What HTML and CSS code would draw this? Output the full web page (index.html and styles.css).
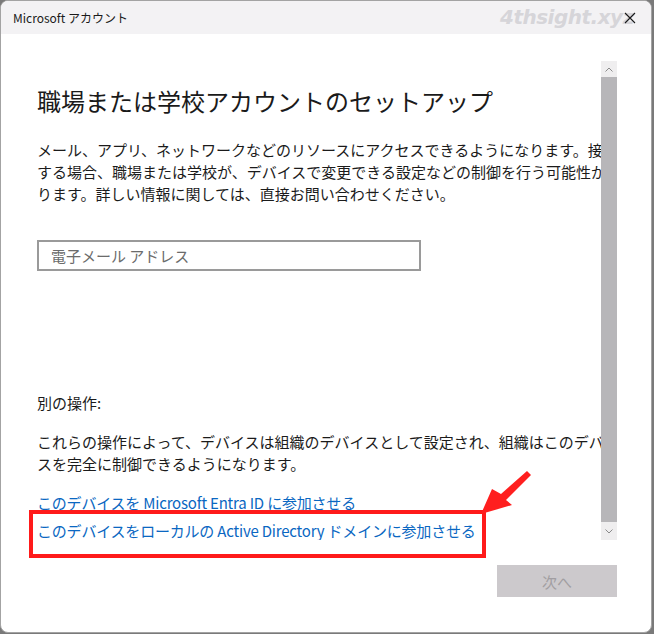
FILE: index.html
```html
<!DOCTYPE html>
<html lang="ja">
<head>
    <meta charset="UTF-8">
    <title>Microsoft アカウント</title>
    <link rel="stylesheet" href="styles.css">
</head>
<body>
    <div class="window">
        <div class="titlebar">
            <span class="title">Microsoft アカウント</span>
            <span class="watermark">4thsight.xyz</span>
            <svg class="close" width="12" height="12" viewBox="0 0 12 12">
                <path d="M1 1 L11 11 M11 1 L1 11" stroke="#1a1a1a" stroke-width="1.1" fill="none"/>
            </svg>
        </div>

        <div class="main">
            <div class="pane">
                <div class="content">
                    <h1>職場または学校アカウントのセットアップ</h1>
                    <p class="lead">メール、アプリ、ネットワークなどのリソースにアクセスできるようになります。接続する場合、職場または学校が、デバイスで変更できる設定などの制御を行う可能性があります。詳しい情報に関しては、直接お問い合わせください。</p>
                    <div class="input">電子メール アドレス</div>

                    <p class="label">別の操作:</p>
                    <p class="note">これらの操作によって、デバイスは組織のデバイスとして設定され、組織はこのデバイスを完全に制御できるようになります。</p>
                    <a class="link first" href="#">このデバイスを Microsoft Entra ID に参加させる</a>
                    <a class="link" href="#">このデバイスをローカルの Active Directory ドメインに参加させる</a>
                </div>
            </div>
            <div class="scrollbar">
                <div class="sb-btn">
                    <svg width="8" height="5" viewBox="0 0 8 5"><path d="M0.5 4.5 L4 1 L7.5 4.5" stroke="#8a8a8a" fill="none"/></svg>
                </div>
                <div class="sb-thumb"></div>
                <div class="sb-btn">
                    <svg width="8" height="5" viewBox="0 0 8 5"><path d="M0.5 0.5 L4 4 L7.5 0.5" stroke="#8a8a8a" fill="none"/></svg>
                </div>
            </div>
        </div>

        <div class="footer">
            <button class="next" disabled>次へ</button>
        </div>

        <div class="highlight"></div>
        <svg class="arrow" width="56" height="50" viewBox="0 0 56 50">
            <polygon points="49,3 53,7 28,32 34,37 3,46 14,21 23,26" fill="#ff1f1f"/>
        </svg>
    </div>
</body>
</html>
```

FILE: styles.css
```css
* {
    box-sizing: border-box;
}
body {
    margin: 0;
    background: #7a7a7a;
    font-family: "Noto Sans CJK JP", "Noto Sans", sans-serif;
    color: #1b1b1b;
}
.window {
    position: relative;
    width: 652px;
    height: 633px;
    background: #fff;
    border: 1px solid #a3a3a3;
    border-radius: 8px;
    overflow: hidden;
}
.titlebar {
    position: relative;
    height: 33px;
    background: #f3f2f4;
    display: flex;
    align-items: center;
    padding-left: 12px;
}
.title {
    font-size: 12px;
    line-height: 16px;
    color: #1a1a1a;
}
.watermark {
    position: absolute;
    left: 499px;
    top: 4px;
    font-family: "DejaVu Sans", sans-serif;
    font-size: 20px;
    font-weight: bold;
    font-style: italic;
    color: #d6d5d9;
    letter-spacing: -0.5px;
}
.close {
    position: absolute;
    left: 623px;
    top: 11px;
}
.main {
    display: flex;
    height: 479px;
    margin-top: 27px;
}
.pane {
    width: 600px;
    overflow: hidden;
}
.content {
    width: 622px;
    padding: 24px 0 0 36px;
}
h1 {
    margin: 0;
    font-size: 24px;
    line-height: 32px;
    font-weight: normal;
    color: #1a1a1a;
}
p {
    margin: 0;
    font-size: 15px;
    line-height: 22px;
}
.lead {
    margin-top: 22px;
}
.input {
    margin-top: 35px;
    width: 384px;
    height: 31px;
    border: 2px solid #9a9a9a;
    padding-left: 12px;
    font-size: 15px;
    line-height: 27px;
    color: #6b6b6b;
}
.label {
    margin-top: 121px;
}
.note {
    margin-top: 17px;
}
.link {
    display: block;
    font-size: 15px;
    line-height: 22px;
    color: #0a67c2;
    text-decoration: none;
    letter-spacing: -0.2px;
    margin-top: 6px;
}
.link.first {
    margin-top: 17px;
}
.scrollbar {
    width: 16px;
    display: flex;
    flex-direction: column;
    background: #efeeef;
}
.sb-btn {
    height: 16px;
    display: flex;
    align-items: center;
    justify-content: center;
}
.sb-btn:last-child {
    height: 18px;
}
.sb-thumb {
    flex: 1;
    background: #b7b6b9;
}
.footer {
    display: flex;
    justify-content: flex-end;
    padding: 25px 34px 0 0;
}
.next {
    width: 120px;
    height: 32px;
    border: none;
    background: #ccc9cc;
    color: #a19ea1;
    font-family: inherit;
    font-size: 15px;
}
.highlight {
    position: absolute;
    left: 28px;
    top: 509px;
    width: 457px;
    height: 48px;
    border: 4px solid #ff1a1a;
}
.arrow {
    position: absolute;
    left: 477px;
    top: 467px;
}
```
